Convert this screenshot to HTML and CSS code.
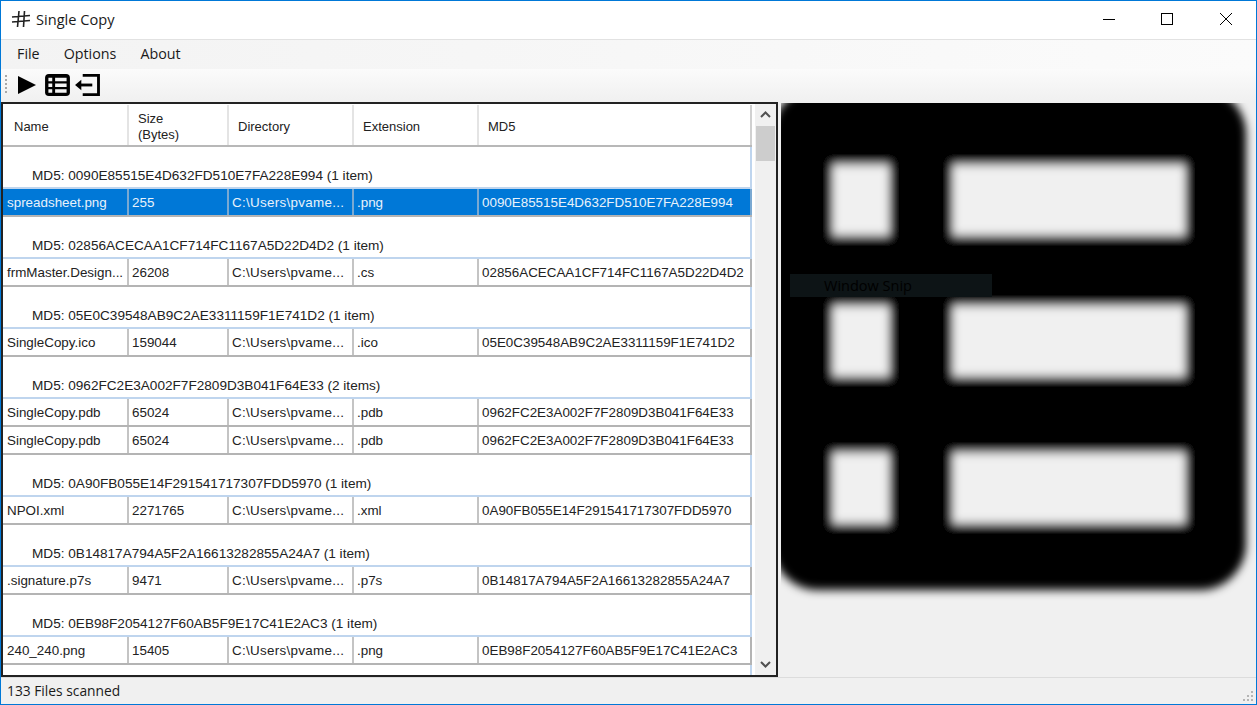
FILE: index.html
```html
<!DOCTYPE html>
<html lang="en">
<head>
    <meta charset="UTF-8">
    <title>Single Copy</title>
    <link rel="stylesheet" href="styles.css">
</head>
<body>
<div class="window">
    <div class="titlebar">
        <svg class="app-icon" width="20" height="18" viewBox="0 0 20 18">
            <path d="M8 1 L6.5 17 M13.5 1 L12.5 17 M1 7 L19 5.5 M1 12 L19 10.5" stroke="#222" stroke-width="1.6" fill="none"/>
        </svg>
        <span class="title">Single Copy</span>
        <div class="controls">
            <div class="control"><svg width="12" height="12" viewBox="0 0 12 12"><path d="M0 6.5 H12" stroke="#000" fill="none"/></svg></div>
            <div class="control"><svg width="12" height="12" viewBox="0 0 12 12"><rect x="0.5" y="0.5" width="11" height="11" stroke="#000" fill="none"/></svg></div>
            <div class="control"><svg width="12" height="12" viewBox="0 0 12 12"><path d="M0 0 L12 12 M12 0 L0 12" stroke="#000" fill="none"/></svg></div>
        </div>
    </div>

    <div class="menubar">
        <span class="menu-item">File</span>
        <span class="menu-item">Options</span>
        <span class="menu-item">About</span>
    </div>

    <div class="toolbar">
        <div class="grip"></div>
        <svg class="tool tool-play" width="18" height="18" viewBox="0 0 19 19"><path d="M0 0 L19 9.5 L0 19 Z" fill="#000"/></svg>
        <svg class="tool" width="25" height="22" viewBox="0 0 26 23">
            <rect width="26" height="23" rx="4" fill="#000"/>
            <path d="M3.5 4 H7.5 V7.5 H3.5 Z M10.5 4 H22.5 V7.5 H10.5 Z M3.5 10 H7.5 V13.5 H3.5 Z M10.5 10 H22.5 V13.5 H10.5 Z M3.5 16 H7.5 V19.5 H3.5 Z M10.5 16 H22.5 V19.5 H10.5 Z" fill="#f4f4f4"/>
        </svg>
        <svg class="tool" width="25" height="22" viewBox="0 0 26 23">
            <path d="M8 1.5 H24.5 V21.5 H8" stroke="#000" stroke-width="3" fill="none"/>
            <path d="M18 11.5 H4" stroke="#000" stroke-width="3" fill="none"/>
            <path d="M0 11.5 L6.5 6 V17 Z" fill="#000"/>
        </svg>
    </div>

    <div class="main">
        <div class="list">
            <div class="table">
                <div class="row header">
                    <div class="cell">Name</div>
                    <div class="cell">Size<br>(Bytes)</div>
                    <div class="cell">Directory</div>
                    <div class="cell">Extension</div>
                    <div class="cell">MD5</div>
                </div>

                <div class="group">MD5: 0090E85515E4D632FD510E7FA228E994 (1 item)</div>
                <div class="row selected">
                    <div class="cell">spreadsheet.png</div>
                    <div class="cell">255</div>
                    <div class="cell">C:\Users\pvame...</div>
                    <div class="cell">.png</div>
                    <div class="cell">0090E85515E4D632FD510E7FA228E994</div>
                </div>

                <div class="group">MD5: 02856ACECAA1CF714FC1167A5D22D4D2 (1 item)</div>
                <div class="row">
                    <div class="cell">frmMaster.Design...</div>
                    <div class="cell">26208</div>
                    <div class="cell">C:\Users\pvame...</div>
                    <div class="cell">.cs</div>
                    <div class="cell">02856ACECAA1CF714FC1167A5D22D4D2</div>
                </div>

                <div class="group">MD5: 05E0C39548AB9C2AE3311159F1E741D2 (1 item)</div>
                <div class="row">
                    <div class="cell">SingleCopy.ico</div>
                    <div class="cell">159044</div>
                    <div class="cell">C:\Users\pvame...</div>
                    <div class="cell">.ico</div>
                    <div class="cell">05E0C39548AB9C2AE3311159F1E741D2</div>
                </div>

                <div class="group">MD5: 0962FC2E3A002F7F2809D3B041F64E33 (2 items)</div>
                <div class="row">
                    <div class="cell">SingleCopy.pdb</div>
                    <div class="cell">65024</div>
                    <div class="cell">C:\Users\pvame...</div>
                    <div class="cell">.pdb</div>
                    <div class="cell">0962FC2E3A002F7F2809D3B041F64E33</div>
                </div>
                <div class="row">
                    <div class="cell">SingleCopy.pdb</div>
                    <div class="cell">65024</div>
                    <div class="cell">C:\Users\pvame...</div>
                    <div class="cell">.pdb</div>
                    <div class="cell">0962FC2E3A002F7F2809D3B041F64E33</div>
                </div>

                <div class="group">MD5: 0A90FB055E14F291541717307FDD5970 (1 item)</div>
                <div class="row">
                    <div class="cell">NPOI.xml</div>
                    <div class="cell">2271765</div>
                    <div class="cell">C:\Users\pvame...</div>
                    <div class="cell">.xml</div>
                    <div class="cell">0A90FB055E14F291541717307FDD5970</div>
                </div>

                <div class="group">MD5: 0B14817A794A5F2A16613282855A24A7 (1 item)</div>
                <div class="row">
                    <div class="cell">.signature.p7s</div>
                    <div class="cell">9471</div>
                    <div class="cell">C:\Users\pvame...</div>
                    <div class="cell">.p7s</div>
                    <div class="cell">0B14817A794A5F2A16613282855A24A7</div>
                </div>

                <div class="group">MD5: 0EB98F2054127F60AB5F9E17C41E2AC3 (1 item)</div>
                <div class="row">
                    <div class="cell">240_240.png</div>
                    <div class="cell">15405</div>
                    <div class="cell">C:\Users\pvame...</div>
                    <div class="cell">.png</div>
                    <div class="cell">0EB98F2054127F60AB5F9E17C41E2AC3</div>
                </div>
                <div class="group-rest"></div>
            </div>

            <div class="scrollbar">
                <svg class="arrow" width="11" height="7" viewBox="0 0 11 7"><path d="M1 6 L5.5 1.5 L10 6" stroke="#505050" stroke-width="2" fill="none"/></svg>
                <div class="thumb"></div>
                <div class="track"></div>
                <svg class="arrow" width="11" height="7" viewBox="0 0 11 7"><path d="M1 1 L5.5 5.5 L10 1" stroke="#505050" stroke-width="2" fill="none"/></svg>
            </div>
        </div>

        <div class="preview">
            <svg class="preview-img" width="475" height="510" viewBox="0 0 475 510">
                <defs>
                    <filter id="soft" x="-10%" y="-10%" width="120%" height="120%">
                        <feGaussianBlur stdDeviation="4.5 5"/>
                    </filter>
                </defs>
                <g filter="url(#soft)">
                    <rect x="-9" y="-15" width="474" height="502" rx="46" fill="#000"/>
                    <rect x="52" y="62" width="56" height="70" fill="#f0f0f0"/>
                    <rect x="172" y="62" width="232" height="70" fill="#f0f0f0"/>
                    <rect x="52" y="203" width="56" height="70" fill="#f0f0f0"/>
                    <rect x="172" y="203" width="232" height="70" fill="#f0f0f0"/>
                    <rect x="52" y="350" width="56" height="70" fill="#f0f0f0"/>
                    <rect x="172" y="350" width="232" height="70" fill="#f0f0f0"/>
                </g>
            </svg>
            <div class="snip">Window Snip</div>
        </div>
    </div>

    <div class="statusbar">
        <span>133 Files scanned</span>
        <svg class="sizer" width="12" height="12" viewBox="0 0 12 12">
            <path d="M9 0 h2 v2 h-2 Z M5 4 h2 v2 h-2 Z M9 4 h2 v2 h-2 Z M1 8 h2 v2 h-2 Z M5 8 h2 v2 h-2 Z M9 8 h2 v2 h-2 Z" fill="#b4b4b4"/>
        </svg>
    </div>
</div>
</body>
</html>
```

FILE: styles.css
```css
html, body {
    margin: 0;
    padding: 0;
    overflow: hidden;
}

.window {
    width: 1257px;
    height: 705px;
    box-sizing: border-box;
    border: 1px solid #0078d7;
    background-color: #f0f0f0;
    display: flex;
    flex-direction: column;
    font-family: "Open Sans", sans-serif;
    color: #1a1a1a;
}

/* title bar */
.titlebar {
    height: 38px;
    flex: none;
    background-color: #fff;
    border-bottom: 1px solid #e2e2e2;
    display: flex;
    align-items: center;
    padding-left: 10px;
}

.app-icon {
    margin-right: 5px;
    margin-bottom: 2px;
}

.title {
    font-size: 14.6px;
    margin-bottom: 2px;
}

.controls {
    margin-left: auto;
    margin-right: 1px;
    display: flex;
    height: 100%;
    padding-bottom: 2px;
    box-sizing: border-box;
}

.control {
    width: 58.5px;
    display: flex;
    align-items: center;
    justify-content: center;
}

/* menu and toolbar */
.menubar {
    height: 29px;
    flex: none;
    box-sizing: border-box;
    padding: 0 0 2px 16px;
    background: linear-gradient(to right, #f3f3f3, #fbfbfb);
    display: flex;
    align-items: center;
    gap: 24px;
    font-size: 14.3px;
}

.toolbar {
    height: 33px;
    flex: none;
    box-sizing: border-box;
    padding: 0 0 2px 4px;
    background: linear-gradient(to bottom, #fbfbfb, #f0f0f0);
    display: flex;
    align-items: center;
}

.grip {
    width: 2px;
    height: 19px;
    margin-right: 11px;
    background-image: linear-gradient(to bottom, #a8a8a8 2px, transparent 2px);
    background-size: 2px 4px;
}

.tool {
    margin-right: 5px;
}

.tool-play {
    margin-right: 9px;
}

/* main area */
.main {
    flex: 1;
    min-height: 0;
    display: flex;
    gap: 3px;
}

.list {
    width: 777px;
    flex: none;
    box-sizing: border-box;
    border: 2px solid #222;
    background-color: #fff;
    display: flex;
    overflow: hidden;
    font-family: "Liberation Sans", Arial, sans-serif;
    font-size: 13.4px;
    color: #222;
}

.table {
    flex: 1;
    min-width: 0;
    display: flex;
    flex-direction: column;
    overflow: hidden;
}

.row {
    display: grid;
    grid-template-columns: 126px 100px 125px 125px 273px;
    width: 749px;
    height: 28px;
    flex: none;
    box-sizing: border-box;
    border-bottom: 2px solid #b4b4b4;
}

.cell {
    box-sizing: border-box;
    border-right: 2px solid #c4c4c4;
    padding-left: 3px;
    display: flex;
    align-items: center;
    white-space: nowrap;
    overflow: hidden;
}

.cell:first-child {
    padding-left: 4px;
}

.row .cell:last-child {
    border-right-color: #b4b4b4;
}

/* the directory column is a bit wider in the original font */
.row:not(.header) .cell:nth-child(3) {
    letter-spacing: 0.3px;
}

.row.header {
    height: 42px;
    margin-top: 1px;
    border-bottom-color: #b8b8b8;
    font-size: 13px;
}

.row.header .cell {
    padding: 3px 0 0 9px;
    line-height: 16px;
    border-right-color: #e4e4e4;
}

.row.header .cell:first-child {
    padding-left: 11px;
}

.row.header .cell:last-child {
    border-right-color: #d0d0d0;
}

.row.selected {
    background-color: #0078d7;
    color: #e8f2fb;
}

.row.selected .cell {
    border-right-color: #7aa9d2;
}

.group {
    height: 42px;
    width: 749px;
    flex: none;
    box-sizing: border-box;
    border-bottom: 2px solid #bfd5ee;
    border-right: 2px solid #bfd5ee;
    padding: 21px 0 0 29px;
    line-height: 16px;
    font-size: 13.6px;
    white-space: nowrap;
}

.group-rest {
    flex: 1;
    width: 749px;
    box-sizing: border-box;
    border-right: 2px solid #bfd5ee;
}

/* scrollbar */
.scrollbar {
    width: 21px;
    flex: none;
    background-color: #f0f0f0;
    display: flex;
    flex-direction: column;
    align-items: center;
}

.arrow {
    flex: none;
    margin: 7px 0;
}

.thumb {
    width: 19px;
    height: 35px;
    flex: none;
    margin-top: 1px;
    background-color: #cdcdcd;
}

.track {
    flex: 1;
}

/* image preview */
.preview {
    flex: 1;
    min-width: 0;
    position: relative;
    overflow: hidden;
    padding-top: 1px;
}

.preview-img {
    display: block;
}

.snip {
    position: absolute;
    left: 9px;
    top: 172px;
    width: 202px;
    height: 23px;
    box-sizing: border-box;
    padding-left: 34px;
    background-color: #0d1416;
    color: #000;
    font-size: 14.5px;
    line-height: 24px;
}

/* status bar */
.statusbar {
    height: 27px;
    flex: none;
    box-sizing: border-box;
    border-top: 1px solid #dcdcdc;
    display: flex;
    align-items: center;
    justify-content: space-between;
    padding: 0 2px 2px 6px;
    font-size: 13.8px;
}

.sizer {
    align-self: flex-end;
    margin-bottom: -1px;
}
```
